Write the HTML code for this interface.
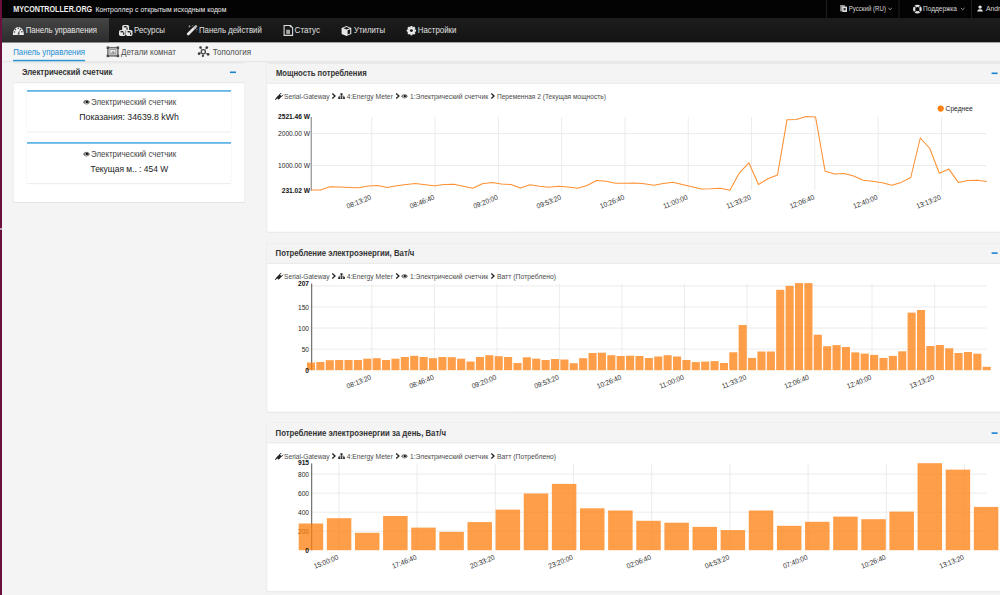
<!DOCTYPE html>
<html><head><meta charset="utf-8"><title>MyController</title>
<style>
html,body{margin:0;padding:0;width:1000px;height:595px;overflow:hidden;background:#f4f4f4}
svg{position:absolute;left:0;top:0;display:block}
text{font-family:'Liberation Sans', sans-serif}
</style></head><body>
<svg width="1000" height="595" viewBox="0 0 1000 595">
<rect x="0" y="0" width="1000" height="595" fill="#f4f4f4"/>
<rect x="0" y="0" width="1000" height="18" fill="#030303"/>
<defs><linearGradient id="gnav" x1="0" y1="0" x2="0" y2="1"><stop offset="0" stop-color="#1d1d1d"/><stop offset="1" stop-color="#131313"/></linearGradient><linearGradient id="gact" x1="0" y1="0" x2="0" y2="1"><stop offset="0" stop-color="#454545"/><stop offset="1" stop-color="#2c2c2c"/></linearGradient></defs>
<rect x="0" y="18" width="1000" height="24.6" fill="url(#gnav)"/>
<rect x="2" y="18" width="107" height="24.6" fill="url(#gact)"/>
<rect x="0" y="42.6" width="1000" height="18.9" fill="#f5f5f5"/>
<rect x="0" y="61.2" width="1000" height="1" fill="#e4e4e4"/>
<rect x="13" y="59.8" width="72" height="1.5" fill="#2a96d4"/>
<rect x="826" y="0" width="1" height="18" fill="#1e1e1e"/>
<rect x="898.5" y="0" width="1" height="18" fill="#1e1e1e"/>
<rect x="971" y="0" width="1" height="18" fill="#1e1e1e"/>
<rect x="0" y="0" width="2" height="595" fill="#6b0f3e"/>
<rect x="0" y="228" width="2" height="2" fill="#b9a1b2"/>
<rect x="2" y="0" width="1.5" height="595" fill="#f8f8f8" opacity="0.0"/>
<rect x="12.9" y="63.1" width="232.2" height="139.8" rx="1.5" fill="#e4e4e4"/>
<rect x="13.5" y="63.6" width="231" height="138.4" rx="1" fill="#ffffff"/>
<rect x="13.5" y="63.6" width="231" height="18.6" rx="1" fill="#f4f4f4"/>
<rect x="13.5" y="82.2" width="231" height="1" fill="#e6e6e6"/>
<rect x="13.5" y="61.9" width="231" height="1.4" fill="#e9e9e9"/>
<rect x="267.2" y="62.1" width="740" height="1.4" fill="#e9e9e9"/>
<rect x="266.59999999999997" y="63.4" width="741.2" height="169.20000000000002" rx="1.5" fill="#e4e4e4"/>
<rect x="267.2" y="63.9" width="740" height="167.8" rx="1" fill="#ffffff"/>
<rect x="267.2" y="63.9" width="740" height="18.8" rx="1" fill="#f4f4f4"/>
<rect x="267.2" y="82.7" width="740" height="1" fill="#e6e6e6"/>
<rect x="266.59999999999997" y="243.3" width="741.2" height="169.4" rx="1.5" fill="#e4e4e4"/>
<rect x="267.2" y="243.8" width="740" height="168" rx="1" fill="#ffffff"/>
<rect x="267.2" y="243.8" width="740" height="19.0" rx="1" fill="#f4f4f4"/>
<rect x="267.2" y="262.8" width="740" height="1" fill="#e6e6e6"/>
<rect x="266.59999999999997" y="422.8" width="741.2" height="169.4" rx="1.5" fill="#e4e4e4"/>
<rect x="267.2" y="423.3" width="740" height="168" rx="1" fill="#ffffff"/>
<rect x="267.2" y="423.3" width="740" height="19.0" rx="1" fill="#f4f4f4"/>
<rect x="267.2" y="442.3" width="740" height="1" fill="#e6e6e6"/>
<rect x="230" y="71.5" width="6" height="1.6" fill="#1a84cf"/>
<rect x="991.6" y="72.5" width="6" height="1.6" fill="#1a84cf"/>
<rect x="991.6" y="252.3" width="6" height="1.6" fill="#1a84cf"/>
<rect x="991.6" y="432.3" width="6" height="1.6" fill="#1a84cf"/>
<rect x="27" y="131.2" width="204" height="1.1" fill="#e3e3e3"/>
<rect x="26.6" y="90" width="204.8" height="41.5" fill="#f1f1f1"/>
<rect x="27" y="90" width="204" height="41.5" fill="#ffffff"/>
<rect x="27" y="90" width="204" height="1.8" fill="#62b6e6"/>
<rect x="27" y="183.0" width="204" height="1.1" fill="#e3e3e3"/>
<rect x="26.6" y="142" width="204.8" height="41.30000000000001" fill="#f1f1f1"/>
<rect x="27" y="142" width="204" height="41.30000000000001" fill="#ffffff"/>
<rect x="27" y="142" width="204" height="1.8" fill="#62b6e6"/>
<text x="13.2" y="12" font-size="8.3" font-weight="bold" fill="#f0f0f0" text-anchor="start" textLength="79" lengthAdjust="spacingAndGlyphs">MYCONTROLLER.ORG</text>
<text x="95.4" y="12" font-size="8.1" font-weight="normal" fill="#f0f0f0" text-anchor="start" textLength="131" lengthAdjust="spacingAndGlyphs">Контроллер с открытым исходным кодом</text>
<text x="848.7" y="11.2" font-size="6.8" font-weight="normal" fill="#d8d8d8" text-anchor="start" textLength="37.3" lengthAdjust="spacingAndGlyphs">Русский (RU)</text>
<text x="923" y="11.2" font-size="6.8" font-weight="normal" fill="#d8d8d8" text-anchor="start" textLength="34" lengthAdjust="spacingAndGlyphs">Поддержка</text>
<text x="986" y="11.2" font-size="6.8" font-weight="normal" fill="#d8d8d8" text-anchor="start">Andr</text>
<text x="25.7" y="33.2" font-size="8.2" font-weight="normal" fill="#e8e8e8" text-anchor="start" textLength="71.3" lengthAdjust="spacingAndGlyphs">Панель управления</text>
<text x="134" y="33.2" font-size="8.2" font-weight="normal" fill="#e0e0e0" text-anchor="start" textLength="31" lengthAdjust="spacingAndGlyphs">Ресурсы</text>
<text x="199" y="33.2" font-size="8.2" font-weight="normal" fill="#e0e0e0" text-anchor="start" textLength="62.8" lengthAdjust="spacingAndGlyphs">Панель действий</text>
<text x="294.6" y="33.2" font-size="8.2" font-weight="normal" fill="#e0e0e0" text-anchor="start" textLength="25.4" lengthAdjust="spacingAndGlyphs">Статус</text>
<text x="354" y="33.2" font-size="8.2" font-weight="normal" fill="#e0e0e0" text-anchor="start" textLength="31" lengthAdjust="spacingAndGlyphs">Утилиты</text>
<text x="417.8" y="33.2" font-size="8.2" font-weight="normal" fill="#e0e0e0" text-anchor="start" textLength="38.6" lengthAdjust="spacingAndGlyphs">Настройки</text>
<text x="13.2" y="54.7" font-size="8.2" font-weight="normal" fill="#1c8dd4" text-anchor="start" textLength="71.8" lengthAdjust="spacingAndGlyphs">Панель управления</text>
<text x="121" y="54.7" font-size="8.3" font-weight="normal" fill="#4d4d4d" text-anchor="start" textLength="55" lengthAdjust="spacingAndGlyphs">Детали комнат</text>
<text x="212.8" y="54.7" font-size="8.3" font-weight="normal" fill="#4d4d4d" text-anchor="start" textLength="38.2" lengthAdjust="spacingAndGlyphs">Топология</text>
<text x="21.9" y="75.0" font-size="8.2" font-weight="bold" fill="#333" text-anchor="start" textLength="90.6" lengthAdjust="spacingAndGlyphs">Электрический счетчик</text>
<text x="275.9" y="76.3" font-size="8.2" font-weight="bold" fill="#333" text-anchor="start" textLength="90.8" lengthAdjust="spacingAndGlyphs">Мощность потребления</text>
<text x="275.6" y="256" font-size="8.2" font-weight="bold" fill="#333" text-anchor="start" textLength="138.8" lengthAdjust="spacingAndGlyphs">Потребление электроэнергии, Ват/ч</text>
<text x="275.6" y="436" font-size="8.2" font-weight="bold" fill="#333" text-anchor="start" textLength="170.4" lengthAdjust="spacingAndGlyphs">Потребление электроэнергии за день, Ват/ч</text>
<text x="91" y="104.6" font-size="8.2" font-weight="normal" fill="#444" text-anchor="start" textLength="85.2" lengthAdjust="spacingAndGlyphs">Электрический счетчик</text>
<text x="79.3" y="120.1" font-size="9.4" font-weight="normal" fill="#1a1a1a" text-anchor="start" textLength="99.5" lengthAdjust="spacingAndGlyphs">Показания: 34639.8 kWh</text>
<text x="91" y="156.6" font-size="8.2" font-weight="normal" fill="#444" text-anchor="start" textLength="85.2" lengthAdjust="spacingAndGlyphs">Электрический счетчик</text>
<text x="90.5" y="171.9" font-size="9.4" font-weight="normal" fill="#1a1a1a" text-anchor="start" textLength="77.6" lengthAdjust="spacingAndGlyphs">Текущая м.. : 454 W</text>
<text x="284" y="98.7" font-size="7.7" font-weight="normal" fill="#4a4a4a" text-anchor="start" textLength="45.5" lengthAdjust="spacingAndGlyphs">Serial-Gateway</text>
<text x="346.7" y="98.7" font-size="7.7" font-weight="normal" fill="#4a4a4a" text-anchor="start" textLength="46.2" lengthAdjust="spacingAndGlyphs">4:Energy Meter</text>
<text x="410" y="98.7" font-size="7.7" font-weight="normal" fill="#4a4a4a" text-anchor="start" textLength="78.1" lengthAdjust="spacingAndGlyphs">1:Электрический счетчик</text>
<text x="496.9" y="98.7" font-size="7.7" font-weight="normal" fill="#4a4a4a" text-anchor="start" textLength="109" lengthAdjust="spacingAndGlyphs">Переменная 2 (Текущая мощность)</text>
<text x="284" y="278.6" font-size="7.7" font-weight="normal" fill="#4a4a4a" text-anchor="start" textLength="45.5" lengthAdjust="spacingAndGlyphs">Serial-Gateway</text>
<text x="346.7" y="278.6" font-size="7.7" font-weight="normal" fill="#4a4a4a" text-anchor="start" textLength="46.2" lengthAdjust="spacingAndGlyphs">4:Energy Meter</text>
<text x="410" y="278.6" font-size="7.7" font-weight="normal" fill="#4a4a4a" text-anchor="start" textLength="78.1" lengthAdjust="spacingAndGlyphs">1:Электрический счетчик</text>
<text x="496.9" y="278.6" font-size="7.7" font-weight="normal" fill="#4a4a4a" text-anchor="start" textLength="59.2" lengthAdjust="spacingAndGlyphs">Ватт (Потреблено)</text>
<text x="284" y="458.6" font-size="7.7" font-weight="normal" fill="#4a4a4a" text-anchor="start" textLength="45.5" lengthAdjust="spacingAndGlyphs">Serial-Gateway</text>
<text x="346.7" y="458.6" font-size="7.7" font-weight="normal" fill="#4a4a4a" text-anchor="start" textLength="46.2" lengthAdjust="spacingAndGlyphs">4:Energy Meter</text>
<text x="410" y="458.6" font-size="7.7" font-weight="normal" fill="#4a4a4a" text-anchor="start" textLength="78.1" lengthAdjust="spacingAndGlyphs">1:Электрический счетчик</text>
<text x="496.9" y="458.6" font-size="7.7" font-weight="normal" fill="#4a4a4a" text-anchor="start" textLength="59.2" lengthAdjust="spacingAndGlyphs">Ватт (Потреблено)</text>
<rect x="371.25" y="117" width="1" height="73.5" fill="#ececec"/>
<rect x="434.55" y="117" width="1" height="73.5" fill="#ececec"/>
<rect x="497.85" y="117" width="1" height="73.5" fill="#ececec"/>
<rect x="561.15" y="117" width="1" height="73.5" fill="#ececec"/>
<rect x="624.45" y="117" width="1" height="73.5" fill="#ececec"/>
<rect x="687.75" y="117" width="1" height="73.5" fill="#ececec"/>
<rect x="751.05" y="117" width="1" height="73.5" fill="#ececec"/>
<rect x="814.3499999999999" y="117" width="1" height="73.5" fill="#ececec"/>
<rect x="877.65" y="117" width="1" height="73.5" fill="#ececec"/>
<rect x="940.9499999999999" y="117" width="1" height="73.5" fill="#ececec"/>
<rect x="311" y="133.1" width="675" height="1" fill="#ececec"/>
<rect x="311" y="165.0" width="675" height="1" fill="#ececec"/>
<rect x="310.7" y="117" width="1" height="73.8" fill="#7a7a7a"/>
<text x="310" y="119.3" font-size="6.6" font-weight="bold" fill="#111" text-anchor="end">2521.46 W</text>
<text x="310" y="136.3" font-size="6.6" font-weight="normal" fill="#262626" text-anchor="end">2000.00 W</text>
<text x="310" y="168.2" font-size="6.6" font-weight="normal" fill="#262626" text-anchor="end">1000.00 W</text>
<text x="310" y="192.5" font-size="6.6" font-weight="bold" fill="#111" text-anchor="end">231.02 W</text>
<polyline points="311.00,190 320.52,190 330.04,186.8 339.56,187 349.08,187.4 358.60,187.7 368.12,186 377.64,185.5 387.16,187.4 396.68,185.8 406.20,184.5 415.72,183.5 425.24,184.7 434.76,185.7 444.28,184.5 453.80,184.2 463.32,186.2 472.84,188.3 482.36,183.8 491.88,182.6 501.40,184 510.92,184.5 520.44,188 529.96,184.7 539.48,186.2 549.00,187.3 558.52,186.2 568.04,187 577.56,188.3 587.08,185.5 596.60,180.5 606.12,181.2 615.64,183.2 625.16,183.2 634.68,183 644.20,183.8 653.72,185.2 663.24,183.5 672.76,182.2 682.28,184.6 691.80,186.8 701.32,189 710.84,188.8 720.36,188.3 729.88,190.2 739.40,172.8 748.92,162.8 758.44,184.5 767.96,178.8 777.48,175.1 787.00,119.8 796.52,119.4 806.04,116.5 815.56,117 825.08,171.2 834.60,174.1 844.12,173.4 853.64,176.1 863.16,180.3 872.68,181.3 882.20,182.7 891.72,185.2 901.24,182.4 910.76,177.5 920.28,138 929.80,148.5 939.32,173.3 948.84,169.1 958.36,182.4 967.88,180.6 977.40,180.3 986.92,181.4" fill="none" stroke="#ff8f30" stroke-width="1.05" stroke-linejoin="round"/>
<circle cx="940.7" cy="108.6" r="3.1" fill="#ff7f0e"/>
<text x="945.6" y="110.8" font-size="6.8" font-weight="normal" fill="#1e1e1e" text-anchor="start" textLength="27" lengthAdjust="spacingAndGlyphs">Среднее</text>
<text x="371.75" y="199.2" font-size="7.2" font-weight="normal" fill="#2a2a2a" text-anchor="end" textLength="25.8" lengthAdjust="spacingAndGlyphs" transform="rotate(-22 371.75 199.2)">08:13:20</text>
<text x="435.05" y="199.2" font-size="7.2" font-weight="normal" fill="#2a2a2a" text-anchor="end" textLength="25.8" lengthAdjust="spacingAndGlyphs" transform="rotate(-22 435.05 199.2)">08:46:40</text>
<text x="498.35" y="199.2" font-size="7.2" font-weight="normal" fill="#2a2a2a" text-anchor="end" textLength="25.8" lengthAdjust="spacingAndGlyphs" transform="rotate(-22 498.35 199.2)">09:20:00</text>
<text x="561.65" y="199.2" font-size="7.2" font-weight="normal" fill="#2a2a2a" text-anchor="end" textLength="25.8" lengthAdjust="spacingAndGlyphs" transform="rotate(-22 561.65 199.2)">09:53:20</text>
<text x="624.95" y="199.2" font-size="7.2" font-weight="normal" fill="#2a2a2a" text-anchor="end" textLength="25.8" lengthAdjust="spacingAndGlyphs" transform="rotate(-22 624.95 199.2)">10:26:40</text>
<text x="688.25" y="199.2" font-size="7.2" font-weight="normal" fill="#2a2a2a" text-anchor="end" textLength="25.8" lengthAdjust="spacingAndGlyphs" transform="rotate(-22 688.25 199.2)">11:00:00</text>
<text x="751.55" y="199.2" font-size="7.2" font-weight="normal" fill="#2a2a2a" text-anchor="end" textLength="25.8" lengthAdjust="spacingAndGlyphs" transform="rotate(-22 751.55 199.2)">11:33:20</text>
<text x="814.8499999999999" y="199.2" font-size="7.2" font-weight="normal" fill="#2a2a2a" text-anchor="end" textLength="25.8" lengthAdjust="spacingAndGlyphs" transform="rotate(-22 814.8499999999999 199.2)">12:06:40</text>
<text x="878.15" y="199.2" font-size="7.2" font-weight="normal" fill="#2a2a2a" text-anchor="end" textLength="25.8" lengthAdjust="spacingAndGlyphs" transform="rotate(-22 878.15 199.2)">12:40:00</text>
<text x="941.4499999999999" y="199.2" font-size="7.2" font-weight="normal" fill="#2a2a2a" text-anchor="end" textLength="25.8" lengthAdjust="spacingAndGlyphs" transform="rotate(-22 941.4499999999999 199.2)">13:13:20</text>
<rect x="371.3" y="283.5" width="1" height="86.5" fill="#ececec"/>
<rect x="433.83000000000004" y="283.5" width="1" height="86.5" fill="#ececec"/>
<rect x="496.36" y="283.5" width="1" height="86.5" fill="#ececec"/>
<rect x="558.89" y="283.5" width="1" height="86.5" fill="#ececec"/>
<rect x="621.4200000000001" y="283.5" width="1" height="86.5" fill="#ececec"/>
<rect x="683.95" y="283.5" width="1" height="86.5" fill="#ececec"/>
<rect x="746.48" y="283.5" width="1" height="86.5" fill="#ececec"/>
<rect x="809.01" y="283.5" width="1" height="86.5" fill="#ececec"/>
<rect x="871.54" y="283.5" width="1" height="86.5" fill="#ececec"/>
<rect x="934.0699999999999" y="283.5" width="1" height="86.5" fill="#ececec"/>
<rect x="311" y="348.625" width="675.5" height="1" fill="#ececec"/>
<rect x="311" y="327.55" width="675.5" height="1" fill="#ececec"/>
<rect x="311" y="306.475" width="675.5" height="1" fill="#ececec"/>
<rect x="311" y="285.4" width="675.5" height="1" fill="#ececec"/>
<rect x="311.2" y="283.5" width="1" height="86.7" fill="#555"/>
<text x="309" y="286" font-size="6.6" font-weight="bold" fill="#111" text-anchor="end">207</text>
<text x="309" y="351.925" font-size="6.6" font-weight="normal" fill="#262626" text-anchor="end">50</text>
<text x="309" y="330.85" font-size="6.6" font-weight="normal" fill="#262626" text-anchor="end">100</text>
<text x="309" y="309.77500000000003" font-size="6.6" font-weight="normal" fill="#262626" text-anchor="end">150</text>
<text x="371.8" y="379.2" font-size="7.2" font-weight="normal" fill="#2a2a2a" text-anchor="end" textLength="25.8" lengthAdjust="spacingAndGlyphs" transform="rotate(-22 371.8 379.2)">08:13:20</text>
<text x="434.33000000000004" y="379.2" font-size="7.2" font-weight="normal" fill="#2a2a2a" text-anchor="end" textLength="25.8" lengthAdjust="spacingAndGlyphs" transform="rotate(-22 434.33000000000004 379.2)">08:46:40</text>
<text x="496.86" y="379.2" font-size="7.2" font-weight="normal" fill="#2a2a2a" text-anchor="end" textLength="25.8" lengthAdjust="spacingAndGlyphs" transform="rotate(-22 496.86 379.2)">09:20:00</text>
<text x="559.39" y="379.2" font-size="7.2" font-weight="normal" fill="#2a2a2a" text-anchor="end" textLength="25.8" lengthAdjust="spacingAndGlyphs" transform="rotate(-22 559.39 379.2)">09:53:20</text>
<text x="621.9200000000001" y="379.2" font-size="7.2" font-weight="normal" fill="#2a2a2a" text-anchor="end" textLength="25.8" lengthAdjust="spacingAndGlyphs" transform="rotate(-22 621.9200000000001 379.2)">10:26:40</text>
<text x="684.45" y="379.2" font-size="7.2" font-weight="normal" fill="#2a2a2a" text-anchor="end" textLength="25.8" lengthAdjust="spacingAndGlyphs" transform="rotate(-22 684.45 379.2)">11:00:00</text>
<text x="746.98" y="379.2" font-size="7.2" font-weight="normal" fill="#2a2a2a" text-anchor="end" textLength="25.8" lengthAdjust="spacingAndGlyphs" transform="rotate(-22 746.98 379.2)">11:33:20</text>
<text x="809.51" y="379.2" font-size="7.2" font-weight="normal" fill="#2a2a2a" text-anchor="end" textLength="25.8" lengthAdjust="spacingAndGlyphs" transform="rotate(-22 809.51 379.2)">12:06:40</text>
<text x="872.04" y="379.2" font-size="7.2" font-weight="normal" fill="#2a2a2a" text-anchor="end" textLength="25.8" lengthAdjust="spacingAndGlyphs" transform="rotate(-22 872.04 379.2)">12:40:00</text>
<text x="934.5699999999999" y="379.2" font-size="7.2" font-weight="normal" fill="#2a2a2a" text-anchor="end" textLength="25.8" lengthAdjust="spacingAndGlyphs" transform="rotate(-22 934.5699999999999 379.2)">13:13:20</text>
<rect x="306.95" y="362.5" width="8.1" height="7.70" fill="#ff7f0e" fill-opacity="0.76"/>
<rect x="316.33" y="362" width="8.1" height="8.20" fill="#ff7f0e" fill-opacity="0.76"/>
<rect x="325.72" y="360.2" width="8.1" height="10.00" fill="#ff7f0e" fill-opacity="0.76"/>
<rect x="335.10" y="360" width="8.1" height="10.20" fill="#ff7f0e" fill-opacity="0.76"/>
<rect x="344.49" y="360" width="8.1" height="10.20" fill="#ff7f0e" fill-opacity="0.76"/>
<rect x="353.88" y="360" width="8.1" height="10.20" fill="#ff7f0e" fill-opacity="0.76"/>
<rect x="363.26" y="358.7" width="8.1" height="11.50" fill="#ff7f0e" fill-opacity="0.76"/>
<rect x="372.64" y="358.2" width="8.1" height="12.00" fill="#ff7f0e" fill-opacity="0.76"/>
<rect x="382.03" y="360" width="8.1" height="10.20" fill="#ff7f0e" fill-opacity="0.76"/>
<rect x="391.42" y="358.7" width="8.1" height="11.50" fill="#ff7f0e" fill-opacity="0.76"/>
<rect x="400.80" y="357" width="8.1" height="13.20" fill="#ff7f0e" fill-opacity="0.76"/>
<rect x="410.19" y="355.8" width="8.1" height="14.40" fill="#ff7f0e" fill-opacity="0.76"/>
<rect x="419.57" y="357" width="8.1" height="13.20" fill="#ff7f0e" fill-opacity="0.76"/>
<rect x="428.95" y="358.2" width="8.1" height="12.00" fill="#ff7f0e" fill-opacity="0.76"/>
<rect x="438.34" y="357" width="8.1" height="13.20" fill="#ff7f0e" fill-opacity="0.76"/>
<rect x="447.72" y="357.2" width="8.1" height="13.00" fill="#ff7f0e" fill-opacity="0.76"/>
<rect x="457.11" y="358.7" width="8.1" height="11.50" fill="#ff7f0e" fill-opacity="0.76"/>
<rect x="466.49" y="361.5" width="8.1" height="8.70" fill="#ff7f0e" fill-opacity="0.76"/>
<rect x="475.88" y="357" width="8.1" height="13.20" fill="#ff7f0e" fill-opacity="0.76"/>
<rect x="485.26" y="355.2" width="8.1" height="15.00" fill="#ff7f0e" fill-opacity="0.76"/>
<rect x="494.65" y="356.2" width="8.1" height="14.00" fill="#ff7f0e" fill-opacity="0.76"/>
<rect x="504.04" y="357" width="8.1" height="13.20" fill="#ff7f0e" fill-opacity="0.76"/>
<rect x="513.42" y="363" width="8.1" height="7.20" fill="#ff7f0e" fill-opacity="0.76"/>
<rect x="522.81" y="357.3" width="8.1" height="12.90" fill="#ff7f0e" fill-opacity="0.76"/>
<rect x="532.19" y="358.7" width="8.1" height="11.50" fill="#ff7f0e" fill-opacity="0.76"/>
<rect x="541.58" y="360" width="8.1" height="10.20" fill="#ff7f0e" fill-opacity="0.76"/>
<rect x="550.96" y="359" width="8.1" height="11.20" fill="#ff7f0e" fill-opacity="0.76"/>
<rect x="560.35" y="359.5" width="8.1" height="10.70" fill="#ff7f0e" fill-opacity="0.76"/>
<rect x="569.73" y="363.2" width="8.1" height="7.00" fill="#ff7f0e" fill-opacity="0.76"/>
<rect x="579.12" y="358.2" width="8.1" height="12.00" fill="#ff7f0e" fill-opacity="0.76"/>
<rect x="588.50" y="353" width="8.1" height="17.20" fill="#ff7f0e" fill-opacity="0.76"/>
<rect x="597.88" y="352.7" width="8.1" height="17.50" fill="#ff7f0e" fill-opacity="0.76"/>
<rect x="607.27" y="355.2" width="8.1" height="15.00" fill="#ff7f0e" fill-opacity="0.76"/>
<rect x="616.65" y="356" width="8.1" height="14.20" fill="#ff7f0e" fill-opacity="0.76"/>
<rect x="626.04" y="355.7" width="8.1" height="14.50" fill="#ff7f0e" fill-opacity="0.76"/>
<rect x="635.42" y="356" width="8.1" height="14.20" fill="#ff7f0e" fill-opacity="0.76"/>
<rect x="644.81" y="358" width="8.1" height="12.20" fill="#ff7f0e" fill-opacity="0.76"/>
<rect x="654.20" y="356.5" width="8.1" height="13.70" fill="#ff7f0e" fill-opacity="0.76"/>
<rect x="663.58" y="355.2" width="8.1" height="15.00" fill="#ff7f0e" fill-opacity="0.76"/>
<rect x="672.97" y="356.5" width="8.1" height="13.70" fill="#ff7f0e" fill-opacity="0.76"/>
<rect x="682.35" y="360" width="8.1" height="10.20" fill="#ff7f0e" fill-opacity="0.76"/>
<rect x="691.74" y="362.1" width="8.1" height="8.10" fill="#ff7f0e" fill-opacity="0.76"/>
<rect x="701.12" y="361.6" width="8.1" height="8.60" fill="#ff7f0e" fill-opacity="0.76"/>
<rect x="710.51" y="361.1" width="8.1" height="9.10" fill="#ff7f0e" fill-opacity="0.76"/>
<rect x="719.89" y="363" width="8.1" height="7.20" fill="#ff7f0e" fill-opacity="0.76"/>
<rect x="729.28" y="352.3" width="8.1" height="17.90" fill="#ff7f0e" fill-opacity="0.76"/>
<rect x="738.66" y="325" width="8.1" height="45.20" fill="#ff7f0e" fill-opacity="0.76"/>
<rect x="748.05" y="357.9" width="8.1" height="12.30" fill="#ff7f0e" fill-opacity="0.76"/>
<rect x="757.43" y="351.5" width="8.1" height="18.70" fill="#ff7f0e" fill-opacity="0.76"/>
<rect x="766.82" y="351.5" width="8.1" height="18.70" fill="#ff7f0e" fill-opacity="0.76"/>
<rect x="776.20" y="289.8" width="8.1" height="80.40" fill="#ff7f0e" fill-opacity="0.76"/>
<rect x="785.59" y="285.9" width="8.1" height="84.30" fill="#ff7f0e" fill-opacity="0.76"/>
<rect x="794.97" y="283.1" width="8.1" height="87.10" fill="#ff7f0e" fill-opacity="0.76"/>
<rect x="804.36" y="283.1" width="8.1" height="87.10" fill="#ff7f0e" fill-opacity="0.76"/>
<rect x="813.74" y="334.7" width="8.1" height="35.50" fill="#ff7f0e" fill-opacity="0.76"/>
<rect x="823.12" y="346.2" width="8.1" height="24.00" fill="#ff7f0e" fill-opacity="0.76"/>
<rect x="832.51" y="345.1" width="8.1" height="25.10" fill="#ff7f0e" fill-opacity="0.76"/>
<rect x="841.89" y="347" width="8.1" height="23.20" fill="#ff7f0e" fill-opacity="0.76"/>
<rect x="851.28" y="352.4" width="8.1" height="17.80" fill="#ff7f0e" fill-opacity="0.76"/>
<rect x="860.67" y="353.6" width="8.1" height="16.60" fill="#ff7f0e" fill-opacity="0.76"/>
<rect x="870.05" y="354.9" width="8.1" height="15.30" fill="#ff7f0e" fill-opacity="0.76"/>
<rect x="879.44" y="357.9" width="8.1" height="12.30" fill="#ff7f0e" fill-opacity="0.76"/>
<rect x="888.82" y="355.9" width="8.1" height="14.30" fill="#ff7f0e" fill-opacity="0.76"/>
<rect x="898.21" y="351.3" width="8.1" height="18.90" fill="#ff7f0e" fill-opacity="0.76"/>
<rect x="907.59" y="312.6" width="8.1" height="57.60" fill="#ff7f0e" fill-opacity="0.76"/>
<rect x="916.98" y="310" width="8.1" height="60.20" fill="#ff7f0e" fill-opacity="0.76"/>
<rect x="926.36" y="346" width="8.1" height="24.20" fill="#ff7f0e" fill-opacity="0.76"/>
<rect x="935.75" y="345" width="8.1" height="25.20" fill="#ff7f0e" fill-opacity="0.76"/>
<rect x="945.13" y="348.3" width="8.1" height="21.90" fill="#ff7f0e" fill-opacity="0.76"/>
<rect x="954.51" y="353" width="8.1" height="17.20" fill="#ff7f0e" fill-opacity="0.76"/>
<rect x="963.90" y="352" width="8.1" height="18.20" fill="#ff7f0e" fill-opacity="0.76"/>
<rect x="973.29" y="353.7" width="8.1" height="16.50" fill="#ff7f0e" fill-opacity="0.76"/>
<rect x="982.67" y="366.8" width="8.1" height="3.40" fill="#ff7f0e" fill-opacity="0.76"/>
<text x="309" y="373" font-size="6.6" font-weight="bold" fill="#111" text-anchor="end">0</text>
<rect x="338.4" y="463.4" width="1" height="86.6" fill="#ececec"/>
<rect x="416.59999999999997" y="463.4" width="1" height="86.6" fill="#ececec"/>
<rect x="494.79999999999995" y="463.4" width="1" height="86.6" fill="#ececec"/>
<rect x="573.0" y="463.4" width="1" height="86.6" fill="#ececec"/>
<rect x="651.2" y="463.4" width="1" height="86.6" fill="#ececec"/>
<rect x="729.4" y="463.4" width="1" height="86.6" fill="#ececec"/>
<rect x="807.6" y="463.4" width="1" height="86.6" fill="#ececec"/>
<rect x="885.8" y="463.4" width="1" height="86.6" fill="#ececec"/>
<rect x="964.0" y="463.4" width="1" height="86.6" fill="#ececec"/>
<rect x="311" y="530.6800000000001" width="675.5" height="1" fill="#ececec"/>
<rect x="311" y="511.6600000000001" width="675.5" height="1" fill="#ececec"/>
<rect x="311" y="492.64000000000004" width="675.5" height="1" fill="#ececec"/>
<rect x="311" y="473.62000000000006" width="675.5" height="1" fill="#ececec"/>
<text x="309" y="533.98" font-size="6.6" font-weight="normal" fill="#262626" text-anchor="end">200</text>
<text x="309" y="514.96" font-size="6.6" font-weight="normal" fill="#262626" text-anchor="end">400</text>
<text x="309" y="495.94000000000005" font-size="6.6" font-weight="normal" fill="#262626" text-anchor="end">600</text>
<text x="309" y="476.9200000000001" font-size="6.6" font-weight="normal" fill="#262626" text-anchor="end">800</text>
<rect x="311.2" y="463.4" width="1" height="86.8" fill="#555"/>
<text x="309" y="465.2" font-size="6.6" font-weight="bold" fill="#111" text-anchor="end">915</text>
<rect x="298.70" y="523.5" width="24.5" height="26.70" fill="#ff7f0e" fill-opacity="0.76"/>
<rect x="326.83" y="518.2" width="24.5" height="32.00" fill="#ff7f0e" fill-opacity="0.76"/>
<rect x="354.96" y="532.8" width="24.5" height="17.40" fill="#ff7f0e" fill-opacity="0.76"/>
<rect x="383.09" y="516" width="24.5" height="34.20" fill="#ff7f0e" fill-opacity="0.76"/>
<rect x="411.22" y="527.6" width="24.5" height="22.60" fill="#ff7f0e" fill-opacity="0.76"/>
<rect x="439.35" y="531.8" width="24.5" height="18.40" fill="#ff7f0e" fill-opacity="0.76"/>
<rect x="467.48" y="522.1" width="24.5" height="28.10" fill="#ff7f0e" fill-opacity="0.76"/>
<rect x="495.61" y="509.6" width="24.5" height="40.60" fill="#ff7f0e" fill-opacity="0.76"/>
<rect x="523.74" y="493.5" width="24.5" height="56.70" fill="#ff7f0e" fill-opacity="0.76"/>
<rect x="551.87" y="483.9" width="24.5" height="66.30" fill="#ff7f0e" fill-opacity="0.76"/>
<rect x="580.00" y="508.3" width="24.5" height="41.90" fill="#ff7f0e" fill-opacity="0.76"/>
<rect x="608.13" y="510.5" width="24.5" height="39.70" fill="#ff7f0e" fill-opacity="0.76"/>
<rect x="636.26" y="520.8" width="24.5" height="29.40" fill="#ff7f0e" fill-opacity="0.76"/>
<rect x="664.39" y="522.7" width="24.5" height="27.50" fill="#ff7f0e" fill-opacity="0.76"/>
<rect x="692.52" y="526.9" width="24.5" height="23.30" fill="#ff7f0e" fill-opacity="0.76"/>
<rect x="720.65" y="530.1" width="24.5" height="20.10" fill="#ff7f0e" fill-opacity="0.76"/>
<rect x="748.78" y="510.5" width="24.5" height="39.70" fill="#ff7f0e" fill-opacity="0.76"/>
<rect x="776.91" y="525.8" width="24.5" height="24.40" fill="#ff7f0e" fill-opacity="0.76"/>
<rect x="805.04" y="521.8" width="24.5" height="28.40" fill="#ff7f0e" fill-opacity="0.76"/>
<rect x="833.17" y="516.6" width="24.5" height="33.60" fill="#ff7f0e" fill-opacity="0.76"/>
<rect x="861.30" y="519.2" width="24.5" height="31.00" fill="#ff7f0e" fill-opacity="0.76"/>
<rect x="889.43" y="511.6" width="24.5" height="38.60" fill="#ff7f0e" fill-opacity="0.76"/>
<rect x="917.56" y="463.2" width="24.5" height="87.00" fill="#ff7f0e" fill-opacity="0.76"/>
<rect x="945.69" y="469.6" width="24.5" height="80.60" fill="#ff7f0e" fill-opacity="0.76"/>
<rect x="973.82" y="506.9" width="24.5" height="43.30" fill="#ff7f0e" fill-opacity="0.76"/>
<text x="309" y="553" font-size="6.6" font-weight="bold" fill="#111" text-anchor="end">0</text>
<text x="338.9" y="559.2" font-size="7.2" font-weight="normal" fill="#2a2a2a" text-anchor="end" textLength="25.8" lengthAdjust="spacingAndGlyphs" transform="rotate(-22 338.9 559.2)">15:00:00</text>
<text x="417.09999999999997" y="559.2" font-size="7.2" font-weight="normal" fill="#2a2a2a" text-anchor="end" textLength="25.8" lengthAdjust="spacingAndGlyphs" transform="rotate(-22 417.09999999999997 559.2)">17:46:40</text>
<text x="495.29999999999995" y="559.2" font-size="7.2" font-weight="normal" fill="#2a2a2a" text-anchor="end" textLength="25.8" lengthAdjust="spacingAndGlyphs" transform="rotate(-22 495.29999999999995 559.2)">20:33:20</text>
<text x="573.5" y="559.2" font-size="7.2" font-weight="normal" fill="#2a2a2a" text-anchor="end" textLength="25.8" lengthAdjust="spacingAndGlyphs" transform="rotate(-22 573.5 559.2)">23:20:00</text>
<text x="651.7" y="559.2" font-size="7.2" font-weight="normal" fill="#2a2a2a" text-anchor="end" textLength="25.8" lengthAdjust="spacingAndGlyphs" transform="rotate(-22 651.7 559.2)">02:06:40</text>
<text x="729.9" y="559.2" font-size="7.2" font-weight="normal" fill="#2a2a2a" text-anchor="end" textLength="25.8" lengthAdjust="spacingAndGlyphs" transform="rotate(-22 729.9 559.2)">04:53:20</text>
<text x="808.1" y="559.2" font-size="7.2" font-weight="normal" fill="#2a2a2a" text-anchor="end" textLength="25.8" lengthAdjust="spacingAndGlyphs" transform="rotate(-22 808.1 559.2)">07:40:00</text>
<text x="886.3" y="559.2" font-size="7.2" font-weight="normal" fill="#2a2a2a" text-anchor="end" textLength="25.8" lengthAdjust="spacingAndGlyphs" transform="rotate(-22 886.3 559.2)">10:26:40</text>
<text x="964.5" y="559.2" font-size="7.2" font-weight="normal" fill="#2a2a2a" text-anchor="end" textLength="25.8" lengthAdjust="spacingAndGlyphs" transform="rotate(-22 964.5 559.2)">13:13:20</text>
<path d="M12.9,33.6 A5.45,6.6 0 0 1 23.8,33.6 V35.1 H12.9 Z" fill="#ececec"/>
<circle cx="14.5" cy="32" r="0.75" fill="#3a3a3a"/>
<circle cx="15.4" cy="29.4" r="0.75" fill="#3a3a3a"/>
<circle cx="18.3" cy="28.3" r="0.75" fill="#3a3a3a"/>
<circle cx="20.5" cy="29.4" r="0.75" fill="#3a3a3a"/>
<circle cx="21.9" cy="31.8" r="0.75" fill="#3a3a3a"/>
<path d="M17.5,34.6 L19.6,29.8 L19.3,34.6 Z" fill="#303030"/>
<rect x="122.2" y="25" width="6.9" height="5.8" rx="1.6" fill="#e6e6e6"/>
<ellipse cx="125.305" cy="26.74" rx="1.725" ry="0.754" fill="#171717"/>
<rect x="126.47800000000001" y="27.436" width="1.242" height="2.2039999999999997" fill="#171717"/>
<rect x="119" y="30" width="6.6" height="5.9" rx="1.6" fill="#e6e6e6"/>
<ellipse cx="121.97" cy="31.77" rx="1.65" ry="0.7670000000000001" fill="#171717"/>
<rect x="123.092" y="32.478" width="1.188" height="2.242" fill="#171717"/>
<rect x="126" y="30" width="6.5" height="5.9" rx="1.6" fill="#e6e6e6"/>
<ellipse cx="128.925" cy="31.77" rx="1.625" ry="0.7670000000000001" fill="#171717"/>
<rect x="130.03" y="32.478" width="1.17" height="2.242" fill="#171717"/>
<line x1="188.2" y1="34.0" x2="194.6" y2="27.6" stroke="#e8e8e8" stroke-width="2.6" stroke-linecap="round"/>
<line x1="194.4" y1="27.8" x2="195.9" y2="26.3" stroke="#bdbdbd" stroke-width="2.6" stroke-linecap="round"/>
<path d="M189.5,25.3 V27.5 M188.4,26.4 H190.6" stroke="#aaa" stroke-width="0.7"/>
<circle cx="192.3" cy="25.4" r="0.5" fill="#888"/><circle cx="197" cy="29.6" r="0.55" fill="#999"/><circle cx="196.5" cy="31.2" r="0.4" fill="#777"/>
<path d="M284.1,25.5 H290.3 L292.6,27.8 V35.4 H284.1 Z" fill="none" stroke="#dcdcdc" stroke-width="1.1"/>
<rect x="286.2" y="29.7" width="3.8" height="4.2" fill="#a9a9a9"/>
<rect x="289.8" y="25.6" width="1.6" height="1.6" fill="#dcdcdc"/>
<path d="M341.6,28 L346.5,25.9 L351.3,28 V33.9 L346.5,36 L341.6,33.9 Z" fill="#e8e8e8"/>
<path d="M343.4,28.2 L346.5,27 L349.7,28.2 L346.5,29.4 Z" fill="#171717"/>
<path d="M347.6,30.3 L350.2,29.3 V33.4 L347.6,34.6 Z" fill="#171717"/>
<rect x="410.25" y="25.9" width="2.3" height="9.4" rx="0.4" fill="#ececec" transform="rotate(0 411.4 30.6)"/>
<rect x="410.25" y="25.9" width="2.3" height="9.4" rx="0.4" fill="#ececec" transform="rotate(45 411.4 30.6)"/>
<rect x="410.25" y="25.9" width="2.3" height="9.4" rx="0.4" fill="#ececec" transform="rotate(90 411.4 30.6)"/>
<rect x="410.25" y="25.9" width="2.3" height="9.4" rx="0.4" fill="#ececec" transform="rotate(135 411.4 30.6)"/>
<circle cx="411.4" cy="30.6" r="3.2" fill="#ececec"/><circle cx="411.4" cy="30.6" r="1.45" fill="#161616"/>
<rect x="107.9" y="47.7" width="10" height="8.2" fill="#f2f2f2" stroke="#6e6e6e" stroke-width="1.5"/>
<rect x="106.65" y="46.45" width="2.5" height="2.5" fill="#4a4a4a"/>
<rect x="116.65" y="46.45" width="2.5" height="2.5" fill="#4a4a4a"/>
<rect x="106.65" y="54.65" width="2.5" height="2.5" fill="#4a4a4a"/>
<rect x="116.65" y="54.65" width="2.5" height="2.5" fill="#4a4a4a"/>
<rect x="109.9" y="49.6" width="6" height="4.5" fill="none" stroke="#8a8a8a" stroke-width="0.9"/>
<path d="M110.4,53.8 L113.2,50.6 L115.6,53.8 Z" fill="#9a9a9a"/>
<path d="M203.3,51.8 L200.5,47.6 M203.3,51.8 L206.8,47.6 M203.3,51.8 L199.1,53.7 M203.3,51.8 L208.1,54.3 M203.3,51.8 L202.9,55.8" stroke="#666" stroke-width="0.8"/>
<circle cx="203.3" cy="51.8" r="2.1" fill="#f5f5f5" stroke="#4a4a4a" stroke-width="1.3"/>
<circle cx="200.5" cy="47.6" r="1.25" fill="#3c3c3c"/>
<circle cx="206.8" cy="47.6" r="1.35" fill="#3c3c3c"/>
<circle cx="199.1" cy="53.7" r="1.35" fill="#3c3c3c"/>
<circle cx="208.1" cy="54.3" r="1.35" fill="#3c3c3c"/>
<circle cx="202.9" cy="55.9" r="1.1" fill="#3c3c3c"/>
<rect x="840.2" y="5" width="4.6" height="6.4" fill="#9a9a9a"/><rect x="842.4" y="6.6" width="4.6" height="5.4" fill="#dedede"/><rect x="843.6" y="8" width="2" height="2.4" fill="#333"/>
<polyline points="888.3000000000001,8 890.1,9.7 891.9,8" fill="none" stroke="#bbb" stroke-width="0.8"/>
<polyline points="960.9000000000001,8 962.7,9.7 964.5,8" fill="none" stroke="#bbb" stroke-width="0.8"/>
<circle cx="917.4" cy="9.1" r="3.3" fill="none" stroke="#e0e0e0" stroke-width="2.2"/>
<rect x="916.9" y="4.6" width="1" height="2.2" fill="#111" transform="rotate(45 917.4 9.1)"/>
<rect x="916.9" y="4.6" width="1" height="2.2" fill="#111" transform="rotate(135 917.4 9.1)"/>
<rect x="916.9" y="4.6" width="1" height="2.2" fill="#111" transform="rotate(225 917.4 9.1)"/>
<rect x="916.9" y="4.6" width="1" height="2.2" fill="#111" transform="rotate(315 917.4 9.1)"/>
<circle cx="980.1" cy="7.1" r="1.7" fill="#e6e6e6"/><path d="M977.2,11.6 Q977.4,9.2 980.1,9.3 Q982.8,9.2 983,11.6 Z" fill="#e6e6e6"/>
<path d="M83.0,102.2 Q86.5,97.37 90.0,102.2 Q86.5,107.03 83.0,102.2 Z" fill="#444" opacity="0.85"/>
<circle cx="86.5" cy="102.2" r="1.7249999999999999" fill="#ddd"/>
<circle cx="86.8" cy="102.10000000000001" r="1.265" fill="#111"/>
<path d="M83.0,154.2 Q86.5,149.36999999999998 90.0,154.2 Q86.5,159.03 83.0,154.2 Z" fill="#444" opacity="0.85"/>
<circle cx="86.5" cy="154.2" r="1.7249999999999999" fill="#ddd"/>
<circle cx="86.8" cy="154.1" r="1.265" fill="#111"/>
<g transform="translate(0 0)"><path d="M275.5,99.3 L277.2,97.6" stroke="#333" stroke-width="1.1" stroke-linecap="round"/><path d="M276.6,97.4 L279.6,94.4 L281.6,96.4 L278.6,99.4 Z" fill="#222" stroke="#222" stroke-width="0.5" stroke-linejoin="round"/><path d="M279.6,94.6 L281.0,93.2 M281.4,96.4 L282.8,95.0" stroke="#222" stroke-width="0.9" stroke-linecap="round"/><polyline points="332.3,93.6 335,96 332.3,98.4" fill="none" stroke="#222" stroke-width="1.3"/><polyline points="396.2,93.6 398.9,96 396.2,98.4" fill="none" stroke="#222" stroke-width="1.3"/><polyline points="491.3,93.6 494,96 491.3,98.4" fill="none" stroke="#222" stroke-width="1.3"/><rect x="340.5" y="93.2" width="2" height="2" fill="#222"/><path d="M339,97.6 V96.2 H344 V97.6 M341.5,95 V97.6" fill="none" stroke="#333" stroke-width="0.7"/><rect x="338.2" y="97.2" width="1.8" height="1.8" fill="#222"/><rect x="340.6" y="97.2" width="1.8" height="1.8" fill="#222"/><rect x="343.1" y="97.2" width="1.8" height="1.8" fill="#222"/></g>
<path d="M401.05,96.2 Q404.5,91.685 407.95,96.2 Q404.5,100.715 401.05,96.2 Z" fill="#555" opacity="0.85"/>
<circle cx="404.5" cy="96.2" r="1.6124999999999998" fill="#ddd"/>
<circle cx="404.8" cy="96.10000000000001" r="1.1825" fill="#111"/>
<g transform="translate(0 180)"><path d="M275.5,99.3 L277.2,97.6" stroke="#333" stroke-width="1.1" stroke-linecap="round"/><path d="M276.6,97.4 L279.6,94.4 L281.6,96.4 L278.6,99.4 Z" fill="#222" stroke="#222" stroke-width="0.5" stroke-linejoin="round"/><path d="M279.6,94.6 L281.0,93.2 M281.4,96.4 L282.8,95.0" stroke="#222" stroke-width="0.9" stroke-linecap="round"/><polyline points="332.3,93.6 335,96 332.3,98.4" fill="none" stroke="#222" stroke-width="1.3"/><polyline points="396.2,93.6 398.9,96 396.2,98.4" fill="none" stroke="#222" stroke-width="1.3"/><polyline points="491.3,93.6 494,96 491.3,98.4" fill="none" stroke="#222" stroke-width="1.3"/><rect x="340.5" y="93.2" width="2" height="2" fill="#222"/><path d="M339,97.6 V96.2 H344 V97.6 M341.5,95 V97.6" fill="none" stroke="#333" stroke-width="0.7"/><rect x="338.2" y="97.2" width="1.8" height="1.8" fill="#222"/><rect x="340.6" y="97.2" width="1.8" height="1.8" fill="#222"/><rect x="343.1" y="97.2" width="1.8" height="1.8" fill="#222"/></g>
<path d="M401.05,276.2 Q404.5,271.685 407.95,276.2 Q404.5,280.715 401.05,276.2 Z" fill="#555" opacity="0.85"/>
<circle cx="404.5" cy="276.2" r="1.6124999999999998" fill="#ddd"/>
<circle cx="404.8" cy="276.09999999999997" r="1.1825" fill="#111"/>
<g transform="translate(0 360)"><path d="M275.5,99.3 L277.2,97.6" stroke="#333" stroke-width="1.1" stroke-linecap="round"/><path d="M276.6,97.4 L279.6,94.4 L281.6,96.4 L278.6,99.4 Z" fill="#222" stroke="#222" stroke-width="0.5" stroke-linejoin="round"/><path d="M279.6,94.6 L281.0,93.2 M281.4,96.4 L282.8,95.0" stroke="#222" stroke-width="0.9" stroke-linecap="round"/><polyline points="332.3,93.6 335,96 332.3,98.4" fill="none" stroke="#222" stroke-width="1.3"/><polyline points="396.2,93.6 398.9,96 396.2,98.4" fill="none" stroke="#222" stroke-width="1.3"/><polyline points="491.3,93.6 494,96 491.3,98.4" fill="none" stroke="#222" stroke-width="1.3"/><rect x="340.5" y="93.2" width="2" height="2" fill="#222"/><path d="M339,97.6 V96.2 H344 V97.6 M341.5,95 V97.6" fill="none" stroke="#333" stroke-width="0.7"/><rect x="338.2" y="97.2" width="1.8" height="1.8" fill="#222"/><rect x="340.6" y="97.2" width="1.8" height="1.8" fill="#222"/><rect x="343.1" y="97.2" width="1.8" height="1.8" fill="#222"/></g>
<path d="M401.05,456.2 Q404.5,451.685 407.95,456.2 Q404.5,460.715 401.05,456.2 Z" fill="#555" opacity="0.85"/>
<circle cx="404.5" cy="456.2" r="1.6124999999999998" fill="#ddd"/>
<circle cx="404.8" cy="456.09999999999997" r="1.1825" fill="#111"/>
</svg>
</body></html>
